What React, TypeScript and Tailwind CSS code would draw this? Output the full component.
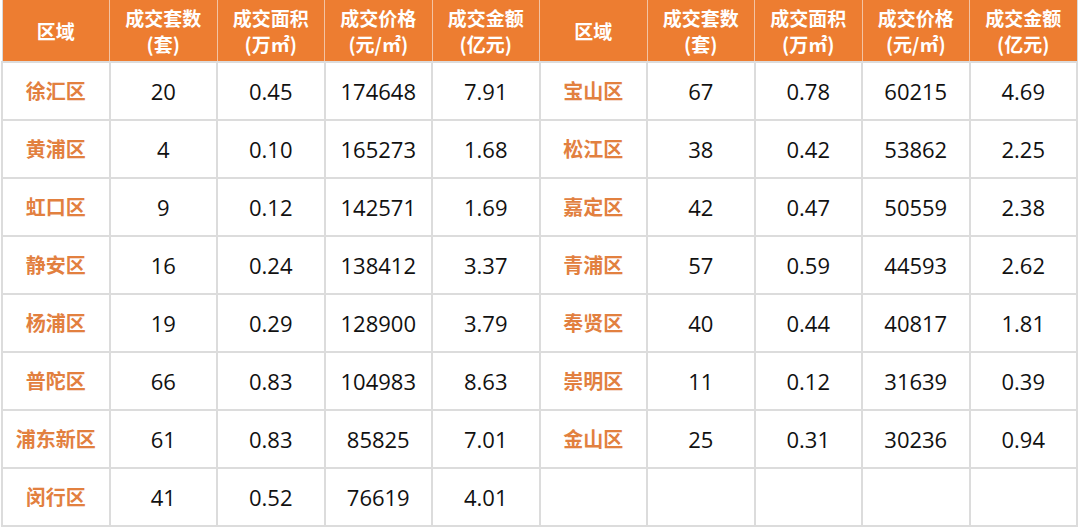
const headers = [
  ['区域'],
  ['成交套数', '(套)'],
  ['成交面积', '(万㎡)'],
  ['成交价格', '(元/㎡)'],
  ['成交金额', '(亿元)'],
];

const left = [
  ['徐汇区', '20', '0.45', '174648', '7.91'],
  ['黄浦区', '4', '0.10', '165273', '1.68'],
  ['虹口区', '9', '0.12', '142571', '1.69'],
  ['静安区', '16', '0.24', '138412', '3.37'],
  ['杨浦区', '19', '0.29', '128900', '3.79'],
  ['普陀区', '66', '0.83', '104983', '8.63'],
  ['浦东新区', '61', '0.83', '85825', '7.01'],
  ['闵行区', '41', '0.52', '76619', '4.01'],
];

const right = [
  ['宝山区', '67', '0.78', '60215', '4.69'],
  ['松江区', '38', '0.42', '53862', '2.25'],
  ['嘉定区', '42', '0.47', '50559', '2.38'],
  ['青浦区', '57', '0.59', '44593', '2.62'],
  ['奉贤区', '40', '0.44', '40817', '1.81'],
  ['崇明区', '11', '0.12', '31639', '0.39'],
  ['金山区', '25', '0.31', '30236', '0.94'],
  ['', '', '', '', ''],
];

export default function App() {
  return (
    <div className="w-[1080px] h-[527px] bg-white pl-px overflow-hidden font-['Noto_Sans_CJK_SC','Noto_Sans',sans-serif]">
      <table className="w-[1077px] table-fixed border-collapse">
        <thead>
          <tr className="h-[62px] bg-[#ed7d31] text-white">
            {[...headers, ...headers].map((h, i) => (
              <th
                key={i}
                className="border-x border-[#f3c3a2] font-bold text-[19px] leading-[26px] align-middle pt-px first:border-l-[#d9d9d9] last:border-r-[#d9d9d9]"
              >
                {h.map((line, j) => (
                  <div key={j}>{line}</div>
                ))}
              </th>
            ))}
          </tr>
        </thead>
        <tbody>
          {left.map((row, r) => (
            <tr key={r} className="h-[58px]">
              {[...row, ...right[r]].map((cell, c) => (
                <td
                  key={c}
                  className={
                    'border-2 border-[#dcdcdc] text-center align-middle ' +
                    (c % 5 === 0
                      ? 'text-[#e2803f] font-bold text-[20px] whitespace-nowrap'
                      : "text-[#111] text-[22px] font-['Open_Sans','Noto_Sans_CJK_SC',sans-serif]")
                  }
                >
                  {cell}
                </td>
              ))}
            </tr>
          ))}
        </tbody>
      </table>
    </div>
  );
}
